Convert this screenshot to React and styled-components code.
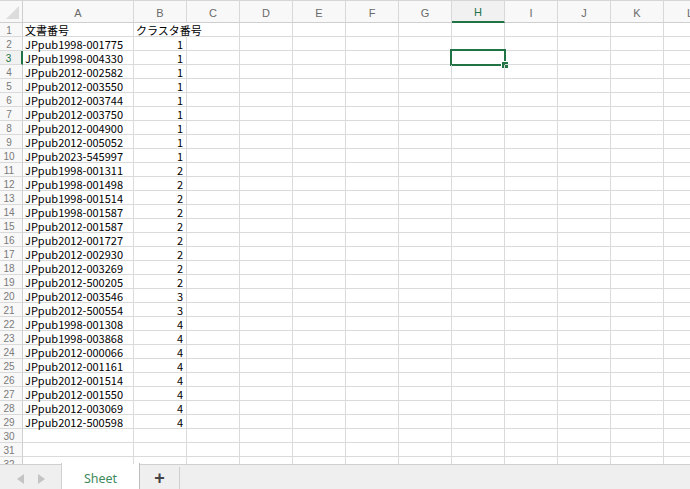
import React from "react";
import styled, { createGlobalStyle, css } from "styled-components";

const GREEN = "#217346";
const GRID = "#dadada";

const Global = createGlobalStyle`
  html, body { margin: 0; padding: 0; background: #fff; }
  body { width: 690px; height: 489px; overflow: hidden; font-family: "Noto Sans CJK JP", "Noto Sans", sans-serif; }
`;

const COLS = ["A", "B", "C", "D", "E", "F", "G", "H", "I", "J", "K", "L"];
const ACTIVE_COL = "H";
const ACTIVE_ROW = 3;
const TOTAL_ROWS = 32;

const data = [
  ["文書番号", "クラスタ番号"],
  ["JPpub1998-001775", 1],
  ["JPpub1998-004330", 1],
  ["JPpub2012-002582", 1],
  ["JPpub2012-003550", 1],
  ["JPpub2012-003744", 1],
  ["JPpub2012-003750", 1],
  ["JPpub2012-004900", 1],
  ["JPpub2012-005052", 1],
  ["JPpub2023-545997", 1],
  ["JPpub1998-001311", 2],
  ["JPpub1998-001498", 2],
  ["JPpub1998-001514", 2],
  ["JPpub1998-001587", 2],
  ["JPpub2012-001587", 2],
  ["JPpub2012-001727", 2],
  ["JPpub2012-002930", 2],
  ["JPpub2012-003269", 2],
  ["JPpub2012-500205", 2],
  ["JPpub2012-003546", 3],
  ["JPpub2012-500554", 3],
  ["JPpub1998-001308", 4],
  ["JPpub1998-003868", 4],
  ["JPpub2012-000066", 4],
  ["JPpub2012-001161", 4],
  ["JPpub2012-001514", 4],
  ["JPpub2012-001550", 4],
  ["JPpub2012-003069", 4],
  ["JPpub2012-500598", 4],
];

const Window = styled.div`
  width: 690px;
  height: 489px;
  display: flex;
  flex-direction: column;
  overflow: hidden;
`;

const Sheet = styled.div`
  height: 465px;
  overflow: hidden;
  display: grid;
  grid-template-columns: 23px 111px repeat(11, 53px);
  grid-auto-rows: 14px;
  grid-template-rows: 23px;
  align-content: start;
`;

const Corner = styled.div`
  position: relative;
  background: #f8f8f8;
  border-top: 1px solid #d6d6d6;
  border-right: 1px solid #cfcfcf;
  border-bottom: 1px solid #cfcfcf;
  &::after {
    content: "";
    position: absolute;
    right: 3px;
    bottom: 3px;
    width: 0;
    height: 0;
    border-left: 13px solid transparent;
    border-bottom: 13px solid #dcdcdc;
  }
`;

const ColHead = styled.div`
  background: #f8f8f8;
  border-top: 1px solid #d6d6d6;
  border-right: 1px solid #d8d8d8;
  border-bottom: 1px solid #cfcfcf;
  font-family: "Liberation Sans", Arial, sans-serif;
  font-size: 11px;
  color: #6a6a6a;
  display: flex;
  align-items: center;
  justify-content: center;
  padding-top: 2px;
  ${(p) =>
    p.$active &&
    css`
      color: ${GREEN};
      border-bottom: 2px solid ${GREEN};
      background: #f1f1f1;
    `}
`;

const RowHead = styled.div`
  background: #f8f8f8;
  border-right: 1px solid #cfcfcf;
  border-bottom: 1px solid ${GRID};
  font-family: "Liberation Sans", Arial, sans-serif;
  font-size: 10px;
  color: #7a7a7a;
  display: flex;
  align-items: center;
  justify-content: center;
  padding-right: 4px;
  padding-top: 2px;
  ${(p) =>
    p.$active &&
    css`
      color: ${GREEN};
      border-right: 2px solid ${GREEN};
      background: #f1f1f1;
    `}
`;

const Cell = styled.div`
  position: relative;
  border-right: 1px solid ${(p) => (p.$spill ? "transparent" : GRID)};
  border-bottom: 1px solid ${GRID};
  font-size: 11px;
  font-weight: 400;
  line-height: 13px;
  padding: 1px 3px 0 2px;
  color: #000;
  white-space: nowrap;
  text-align: ${(p) => (p.$num ? "right" : "left")};
  overflow: visible;
  z-index: ${(p) => (p.$spill ? 1 : 0)};
`;

const Selection = styled.div`
  position: absolute;
  left: -2px;
  top: -2px;
  right: -2px;
  bottom: -2px;
  border: 2px solid ${GREEN};
  z-index: 3;
  &::after {
    content: "";
    position: absolute;
    right: -5px;
    bottom: -5px;
    width: 6px;
    height: 6px;
    background: ${GREEN};
    border: 1px solid #fff;
  }
`;

const TabBar = styled.div`
  height: 24px;
  background: #efefef;
  border-top: 1px solid #cfcfcf;
  display: flex;
  align-items: stretch;
`;

const Nav = styled.div`
  width: 61px;
  display: flex;
  align-items: center;
  justify-content: center;
  gap: 14px;
  padding-top: 3px;
`;

const Arrow = styled.span`
  width: 0;
  height: 0;
  border-top: 5px solid transparent;
  border-bottom: 5px solid transparent;
  ${(p) =>
    p.$dir === "left"
      ? css`border-right: 7px solid #c4c4c4;`
      : css`border-left: 7px solid #c4c4c4;`}
`;

const Tab = styled.div`
  width: 77px;
  margin-top: -2px;
  background: #fff;
  border-left: 1px solid #d0d0d0;
  border-right: 1px solid #bdbdbd;
  display: flex;
  align-items: center;
  justify-content: center;
  font-family: "Noto Sans", "Liberation Sans", sans-serif;
  font-size: 12.5px;
  color: #3f8a5c;
  padding-top: 4px;
`;

const AddButton = styled.div`
  width: 39px;
  border-right: 1px solid #cfcfcf;
  margin-top: 2px;
  display: flex;
  align-items: center;
  justify-content: center;
  font-family: "Liberation Sans", Arial, sans-serif;
  font-size: 18px;
  font-weight: bold;
  color: #444;
  padding-top: 1px;
`;

export default function App() {
  const rows = [];
  for (let r = 1; r <= TOTAL_ROWS; r++) {
    const rowData = data[r - 1] || [];
    const activeRow = r === ACTIVE_ROW;
    rows.push(
      <RowHead key={`rh${r}`} $active={activeRow}>
        {r}
      </RowHead>
    );
    COLS.forEach((c, i) => {
      const v = rowData[i];
      const isNum = typeof v === "number";
      const spill = r === 1 && c === "B";
      rows.push(
        <Cell key={`${c}${r}`} $num={isNum} $spill={spill}>
          {v !== undefined ? v : ""}
          {activeRow && c === ACTIVE_COL && <Selection />}
        </Cell>
      );
    });
  }

  return (
    <Window>
      <Global />
      <Sheet>
        <Corner />
        {COLS.map((c) => (
          <ColHead key={c} $active={c === ACTIVE_COL}>
            {c}
          </ColHead>
        ))}
        {rows}
      </Sheet>
      <TabBar>
        <Nav>
          <Arrow $dir="left" />
          <Arrow $dir="right" />
        </Nav>
        <Tab>Sheet</Tab>
        <AddButton>+</AddButton>
      </TabBar>
    </Window>
  );
}
